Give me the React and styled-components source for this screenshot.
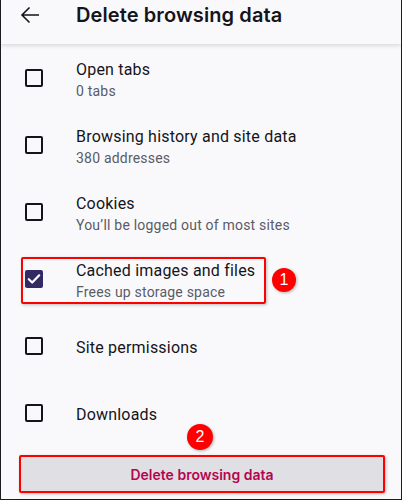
import React from "react";
import styled, { createGlobalStyle } from "styled-components";

const GlobalStyle = createGlobalStyle`
  html, body {
    margin: 0;
    padding: 0;
    background: #f9f9fb;
  }
`;

const Screen = styled.div`
  width: 402px;
  height: 500px;
  box-sizing: border-box;
  background: #f9f9fb;
  border: 1px solid #1c1b22;
  border-top: none;
  overflow: hidden;
  font-family: Roboto, "Liberation Sans", sans-serif;
  display: flex;
  flex-direction: column;
`;

const Header = styled.div`
  height: 44px;
  flex-shrink: 0;
  box-sizing: border-box;
  padding-top: 3px;
  display: flex;
  align-items: flex-start;
  background: #f9f9fb;
  box-shadow: 0 2px 4px rgba(0, 0, 0, 0.12);
  position: relative;
  z-index: 1;
`;

const BackButton = styled.div`
  width: 75px;
  height: 24px;
  display: flex;
  align-items: center;
  padding-left: 19px;
  box-sizing: border-box;
`;

const Title = styled.div`
  font-family: Inter, "Noto Sans", sans-serif;
  font-size: 20px;
  line-height: 24px;
  font-weight: 600;
  color: #15141a;
  letter-spacing: 0.1px;
`;

const List = styled.div`
  display: flex;
  flex-direction: column;
`;

const Row = styled.div`
  height: 67px;
  display: flex;
  align-items: center;
  padding-left: 24px;
  gap: 33px;
  position: relative;
`;

const Box = styled.div`
  width: 18px;
  height: 18px;
  box-sizing: border-box;
  border-radius: 2px;
  border: ${(p) => (p.$checked ? "none" : "2px solid #15141a")};
  background: ${(p) => (p.$checked ? "#312a65" : "transparent")};
  display: flex;
  align-items: center;
  justify-content: center;
  flex-shrink: 0;
`;

const Texts = styled.div`
  display: flex;
  flex-direction: column;
  gap: 4px;
  margin-top: 4px;
`;

const Label = styled.div`
  font-size: 16px;
  color: #15141a;
  letter-spacing: 0.2px;
`;

const Sub = styled.div`
  font-size: 14px;
  color: #5b5b66;
  letter-spacing: 0.2px;
`;

const Highlight = styled.div`
  position: absolute;
  left: 20px;
  top: 12px;
  width: 245px;
  height: 47px;
  box-sizing: border-box;
  border: 2px solid #f00;
  border-radius: 2px;
  box-shadow: 1px 1px 3px rgba(0, 0, 0, 0.25);
  pointer-events: none;
`;

const Badge = styled.div`
  position: absolute;
  width: 24px;
  height: 24px;
  border-radius: 50%;
  background: #f00;
  color: #fff;
  font-family: "Liberation Sans", Arial, sans-serif;
  font-size: 16px;
  display: flex;
  align-items: center;
  justify-content: center;
  box-shadow: 1px 1px 3px rgba(0, 0, 0, 0.3);
  z-index: 2;
`;

const Footer = styled.div`
  position: relative;
  padding: 9px 16px 0 18px;
`;

const DeleteButton = styled.div`
  height: 38px;
  box-sizing: border-box;
  border: 2px solid #f00;
  border-radius: 2px;
  background: #e0dfe4;
  box-shadow: 1px 1px 3px rgba(0, 0, 0, 0.25);
  display: flex;
  align-items: center;
  justify-content: center;
  font-family: Inter, "Noto Sans", sans-serif;
  font-size: 14px;
  font-weight: 600;
  color: #b3064f;
`;

const items = [
  { label: "Open tabs", sub: "0 tabs" },
  { label: "Browsing history and site data", sub: "380 addresses" },
  { label: "Cookies", sub: "You’ll be logged out of most sites" },
  { label: "Cached images and files", sub: "Frees up storage space", checked: true, mark: "1" },
  { label: "Site permissions" },
  { label: "Downloads" },
];

const Arrow = () => (
  <svg width="20" height="18" viewBox="0 0 20 18" fill="none">
    <path d="M19 9H2M9.5 1.5L2 9l7.5 7.5" stroke="#15141a" strokeWidth="1.6" />
  </svg>
);

const Check = () => (
  <svg width="14" height="12" viewBox="0 0 14 12" fill="none">
    <path d="M1.8 6.2l3.4 3.3L12.2 2.3" stroke="#fff" strokeWidth="2.2" strokeLinecap="round" strokeLinejoin="round" />
  </svg>
);

export default function App() {
  return (
    <>
      <GlobalStyle />
      <Screen>
        <Header>
          <BackButton>
            <Arrow />
          </BackButton>
          <Title>Delete browsing data</Title>
        </Header>
        <List>
          {items.map((it) => (
            <Row key={it.label}>
              <Box $checked={it.checked}>{it.checked && <Check />}</Box>
              <Texts>
                <Label>{it.label}</Label>
                {it.sub && <Sub>{it.sub}</Sub>}
              </Texts>
              {it.mark && (
                <>
                  <Highlight />
                  <Badge style={{ left: 271, top: 23 }}>{it.mark}</Badge>
                </>
              )}
            </Row>
          ))}
        </List>
        <Footer>
          <Badge style={{ left: 186, top: -22, width: 26, height: 26 }}>2</Badge>
          <DeleteButton>Delete browsing data</DeleteButton>
        </Footer>
      </Screen>
    </>
  );
}
